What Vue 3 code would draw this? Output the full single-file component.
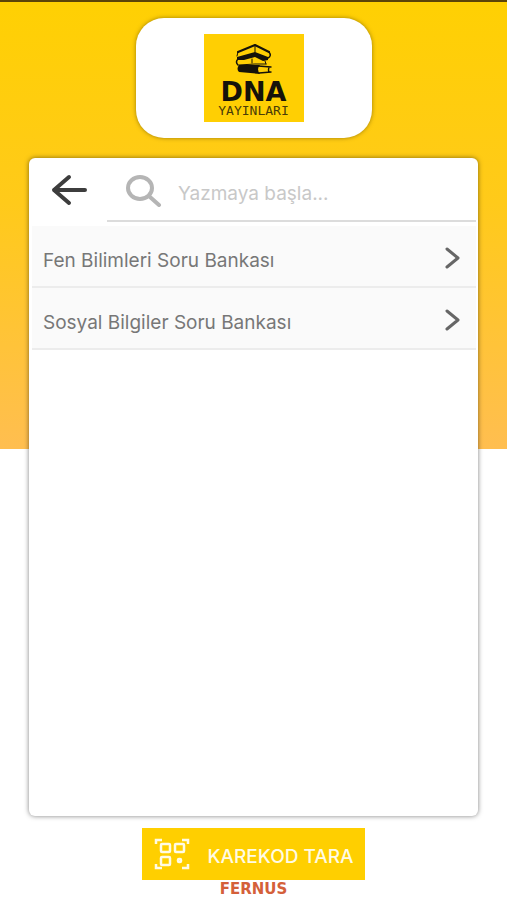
<script setup>
import { computed, ref } from 'vue';

const search = ref('');

const books = [
    { id: 1, title: 'Fen Bilimleri Soru Bankası' },
    { id: 2, title: 'Sosyal Bilgiler Soru Bankası' }
];

const filteredBooks = computed(() => {
    const term = search.value.toLocaleLowerCase('tr');
    return books.filter((book) => book.title.toLocaleLowerCase('tr').includes(term));
});
</script>

<template>
    <div class="page">
        <header class="brand">
            <div class="logo">
                <svg class="logo-books" viewBox="0 0 38 34" aria-hidden="true">
                    <g fill="none" stroke="#15120a" stroke-linejoin="round" stroke-linecap="round">
                        <path d="M3 10 L20 3 L34 10" stroke-width="2" />
                        <path d="M3 10 L2 14 M20 4 V10" stroke-width="1" />
                        <path d="M34 10 Q37 14 33 16" stroke-width="1.5" />
                        <path d="M3 17 Q0 20 3 23" stroke-width="1.5" />
                        <path d="M4 23 L20 22 L31 22 M30 19 L31 22 M17 17 V21" stroke-width="1" />
                        <path d="M23 24 L36 25 M24 31 L36 30 M34 25 Q33 28 34 30" stroke-width="1.4" />
                    </g>
                    <path d="M2 15 L20 10 L33 15 V18 L28 19 L20 15 L9 18 H2 Z" fill="#15120a" />
                    <path d="M4 23 H25 Q21 27 25 32 L4 30 Q1 27 4 23 Z" fill="#15120a" />
                </svg>
                <span class="logo-name">DNA</span>
                <span class="logo-sub">YAYINLARI</span>
            </div>
        </header>

        <main class="panel">
            <div class="toolbar">
                <button class="back" type="button" aria-label="Geri">
                    <svg viewBox="0 0 38 34" width="38" height="34" aria-hidden="true">
                        <path
                            d="M34 17 H3 M18 4 L3 17 L18 30"
                            fill="none"
                            stroke="#3d3d3d"
                            stroke-width="4"
                            stroke-linecap="round"
                            stroke-linejoin="round"
                        />
                    </svg>
                </button>
                <label class="search">
                    <svg viewBox="0 0 36 32" width="36" height="32" aria-hidden="true">
                        <ellipse cx="14" cy="13" rx="12" ry="11" fill="none" stroke="#b5b5b5" stroke-width="4" />
                        <path d="M24 22 L33 30" stroke="#b5b5b5" stroke-width="4" stroke-linecap="round" />
                    </svg>
                    <input v-model="search" type="text" placeholder="Yazmaya başla..." aria-label="Ara" />
                </label>
            </div>

            <ul class="list">
                <li v-for="book in filteredBooks" :key="book.id">
                    <button class="row" type="button">
                        <span class="row-title">{{ book.title }}</span>
                        <svg viewBox="0 0 16 22" width="16" height="22" aria-hidden="true">
                            <path
                                d="M3 2 L14 11 L3 20"
                                fill="none"
                                stroke="#666"
                                stroke-width="3"
                                stroke-linecap="round"
                                stroke-linejoin="round"
                            />
                        </svg>
                    </button>
                </li>
            </ul>
        </main>

        <footer class="footer">
            <button class="scan" type="button">
                <svg viewBox="0 0 36 32" width="36" height="32" aria-hidden="true">
                    <g fill="none" stroke="#fffbe5" stroke-width="2.5">
                        <path d="M2 6 V2 H8 M28 2 H34 V6 M2 26 V30 H8 M28 30 H34 V26" />
                        <rect x="7" y="6" width="9" height="8" rx="1" />
                        <rect x="21" y="6" width="9" height="8" rx="1" />
                        <rect x="7" y="19" width="9" height="8" rx="1" />
                        <rect x="24" y="21" width="3" height="3" rx="1" />
                    </g>
                </svg>
                <span class="scan-label">KAREKOD TARA</span>
            </button>
            <span class="vendor">FERNUS</span>
        </footer>
    </div>
</template>

<style>
body {
    margin: 0;
    background: #fff;
}
</style>

<style scoped>
.page {
    box-sizing: border-box;
    min-height: 100vh;
    display: flex;
    flex-direction: column;
    padding: 16px 29px 5px;
    border-top: 2px solid #5c4408;
    background: linear-gradient(#ffd003, #ffca1a 45%, #ffbe50) top / 100% calc(50vh - 3px) no-repeat;
    font-family: Inter, 'Noto Sans', sans-serif;
}

button {
    border: 0;
    font-family: inherit;
    cursor: pointer;
}

.brand {
    box-sizing: border-box;
    align-self: center;
    width: 236px;
    height: 120px;
    margin-bottom: 20px;
    display: flex;
    align-items: center;
    justify-content: center;
    background: #fff;
    border-radius: 28px;
    box-shadow: 0 0 4px rgba(90, 70, 0, 0.6);
}

.logo {
    box-sizing: border-box;
    width: 100px;
    height: 88px;
    padding-top: 8px;
    display: flex;
    flex-direction: column;
    align-items: center;
    background: #ffcf03;
    color: #15120a;
}

.logo-books {
    width: 38px;
    height: 34px;
    margin-bottom: 2px;
}

.logo-name {
    font: bold 27px/28px 'DejaVu Sans', sans-serif;
}

.logo-sub {
    font: 13px/10px 'DejaVu Sans Mono', monospace;
    color: #4a3c08;
}

.panel {
    flex: 1;
    padding: 0 2px 0 3px;
    background: #fff;
    border-radius: 6px;
    box-shadow: 0 0 5px rgba(0, 0, 0, 0.5);
}

.toolbar {
    display: flex;
    height: 64px;
    margin-bottom: 4px;
}

.back {
    width: 75px;
    padding: 2px 0 0;
    background: none;
}

.search {
    box-sizing: border-box;
    flex: 1;
    min-width: 0;
    display: flex;
    align-items: center;
    gap: 16px;
    padding: 4px 0 0 19px;
    border-bottom: 2px solid #dcdcdc;
}

.search input {
    flex: 1;
    min-width: 0;
    padding: 6px 0 0;
    border: 0;
    outline: 0;
    background: none;
    font: 19px/24px Inter, sans-serif;
    color: #666;
}

.search input::placeholder {
    color: #c8c8c8;
    opacity: 1;
}

.list {
    margin: 0;
    padding: 0;
    list-style: none;
}

.row {
    width: 100%;
    height: 62px;
    padding: 4px 16px 0 11px;
    display: flex;
    align-items: center;
    justify-content: space-between;
    border-bottom: 2px solid #ececec;
    background: #fafafa;
    font-size: 19px;
    line-height: 24px;
    color: #777;
    text-align: left;
}

.row-title {
    padding-top: 6px;
}

.footer {
    display: flex;
    flex-direction: column;
    align-items: center;
    gap: 4px;
    margin-top: 12px;
}

.scan {
    height: 52px;
    padding: 0 11px 0 12px;
    display: flex;
    align-items: center;
    gap: 17px;
    background: #ffcf00;
    color: #fffbe5;
    font-size: 19px;
    font-weight: 500;
}

.scan-label {
    padding-top: 4px;
}

.vendor {
    font: bold 15px/11px 'DejaVu Sans', sans-serif;
    color: #d4603a;
}
</style>
